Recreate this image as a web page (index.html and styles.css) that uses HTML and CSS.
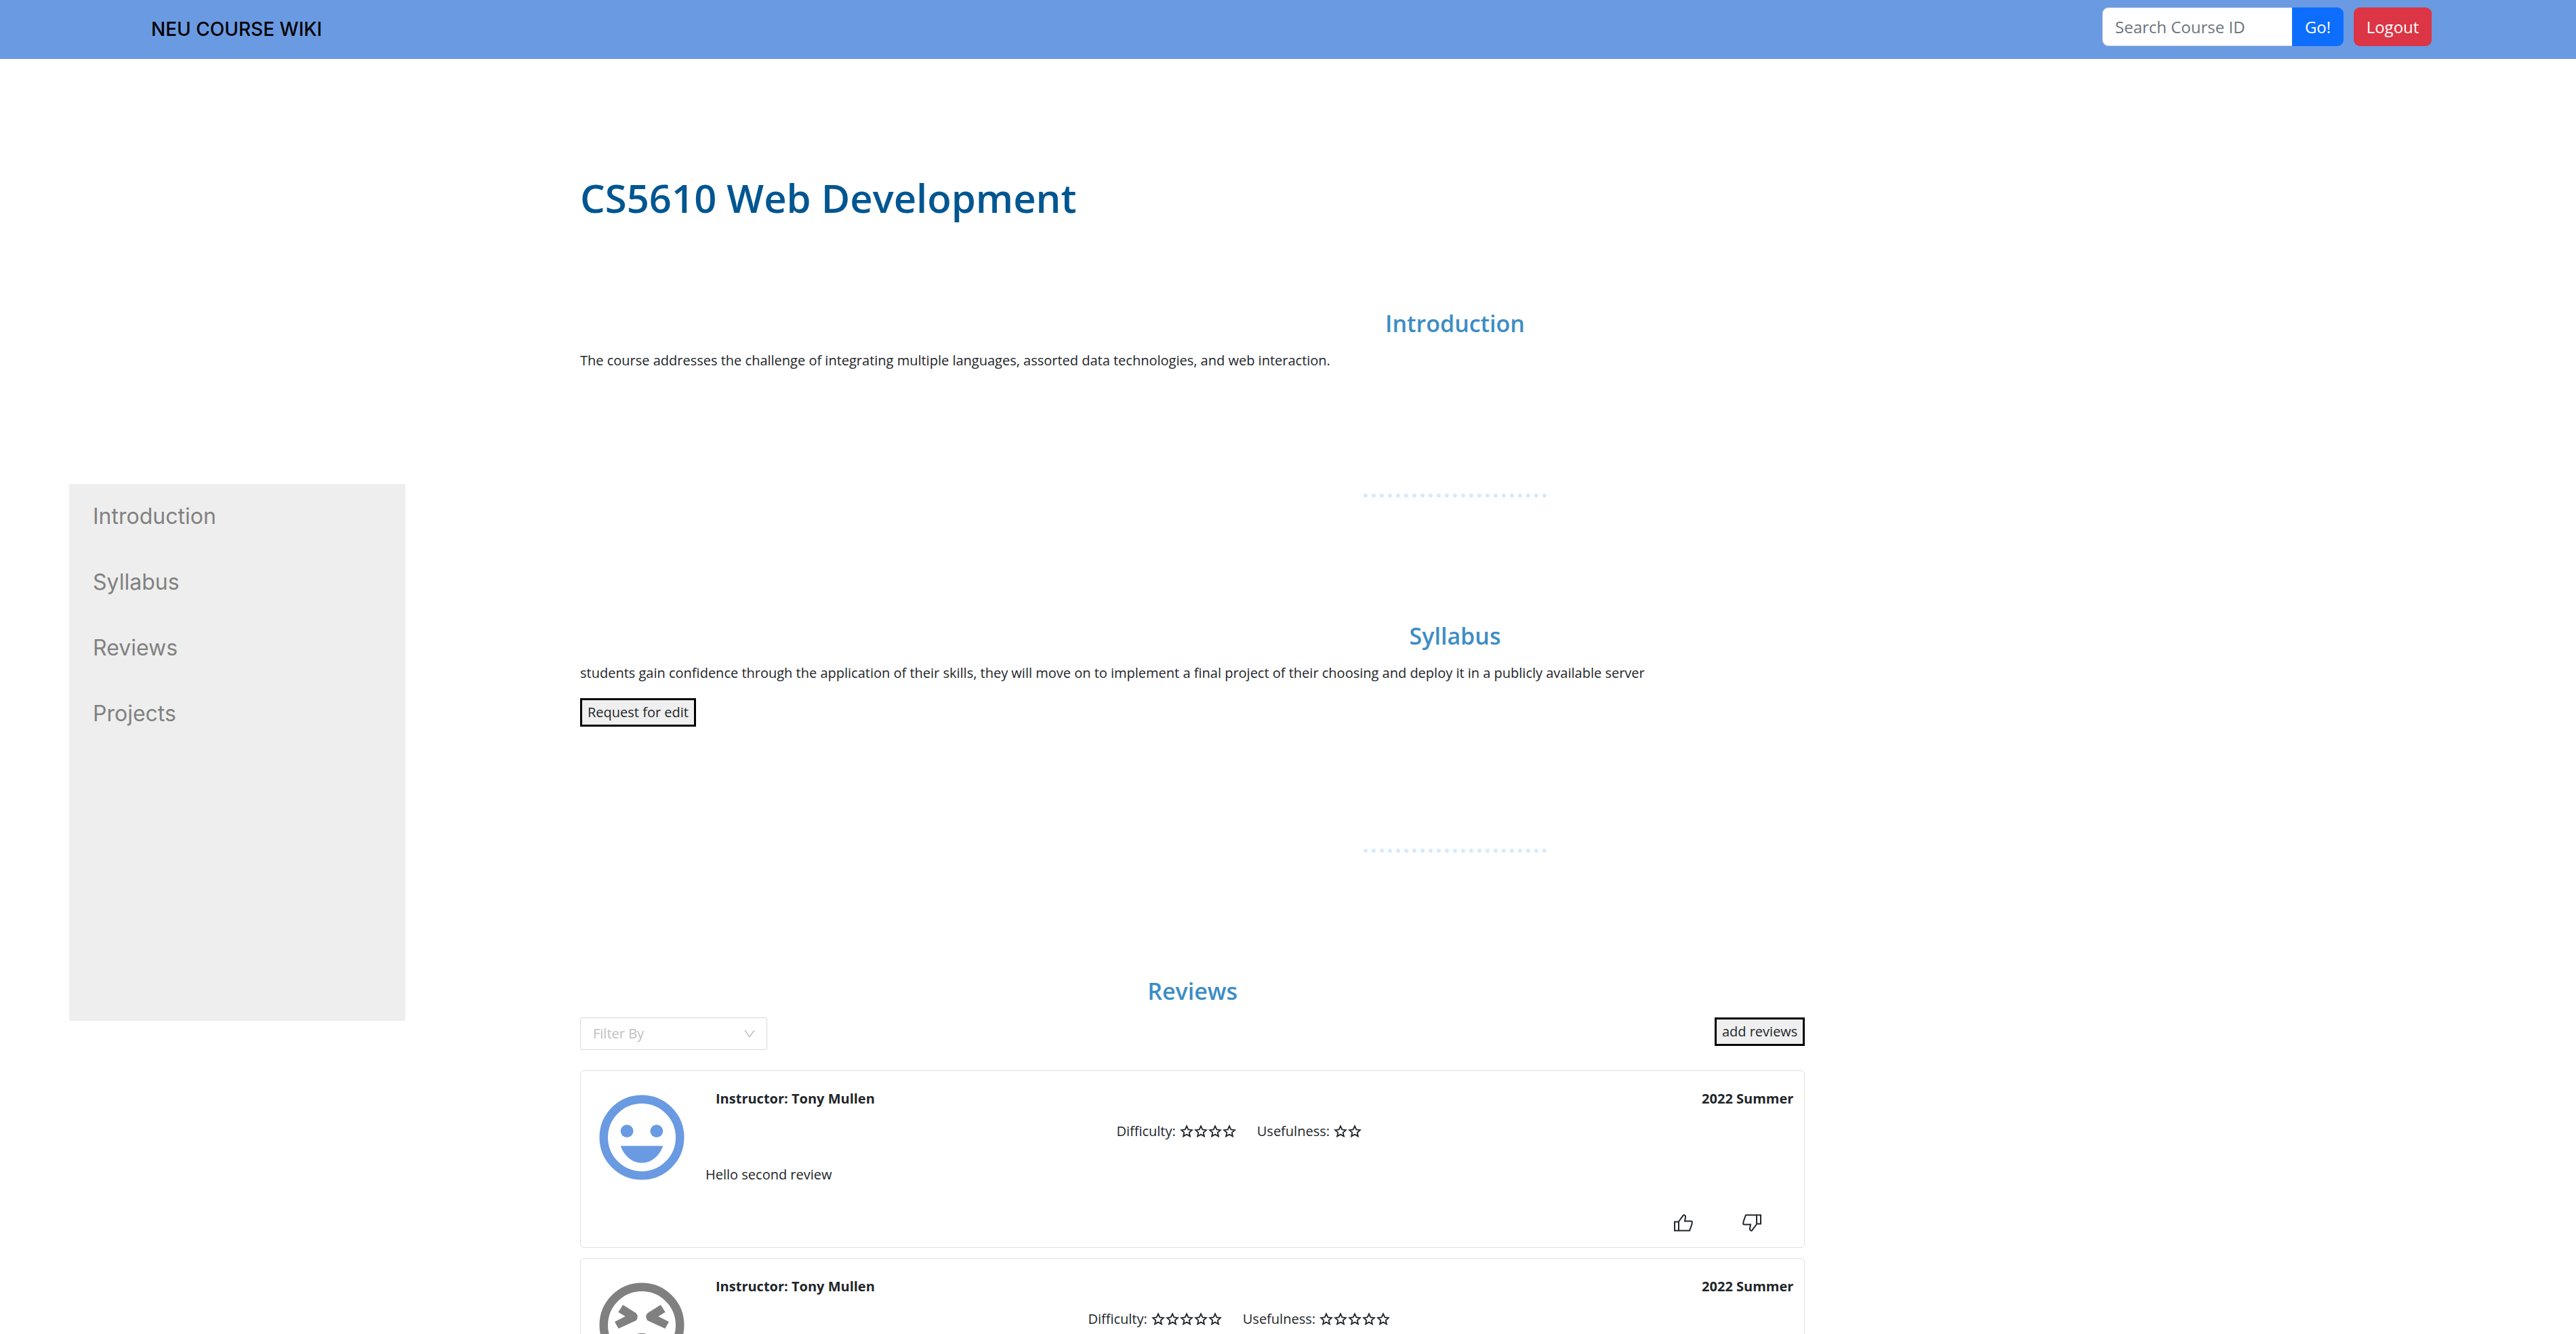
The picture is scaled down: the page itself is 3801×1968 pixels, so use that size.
FILE: index.html
```html
<!DOCTYPE html>
<html lang="en">
<head>
<meta charset="utf-8">
<title>NEU Course Wiki</title>
<link rel="stylesheet" href="styles.css">
</head>
<body>
<svg class="sprite" aria-hidden="true">
  <symbol id="star" viewBox="0 0 24 24"><path d="M12 2.8l2.8 6.2 6.7.7-5 4.5 1.4 6.6-5.9-3.4-5.9 3.4 1.4-6.6-5-4.5 6.7-.7z" fill="none" stroke="currentColor" stroke-width="2.2"/></symbol>
  <symbol id="thumb" viewBox="0 0 28 26"><path d="M7 11L13.6 2.2Q14.2 .8 15.6 1.6Q17.4 2.4 17 4.4L16 10.5H25.8Q27 10.7 26.8 12.2L26.4 15L23 24.5H1V11.5H7V24.5" fill="none" stroke="currentColor" stroke-width="2"/></symbol>
</svg>
<header class="navbar">
  <a class="brand" href="#">NEU COURSE WIKI</a>
  <form class="search">
    <input class="search-input" type="text" placeholder="Search Course ID" aria-label="Search Course ID">
    <button class="btn btn-go" type="button">Go!</button>
    <button class="btn btn-logout" type="button">Logout</button>
  </form>
</header>
<div class="page">
  <nav class="sidebar">
    <a href="#introduction">Introduction</a>
    <a href="#syllabus">Syllabus</a>
    <a href="#reviews">Reviews</a>
    <a href="#projects">Projects</a>
  </nav>
  <main class="content">
    <h1>CS5610 Web Development</h1>
    <section id="introduction">
      <h2>Introduction</h2>
      <p>The course addresses the challenge of integrating multiple languages, assorted data technologies, and web interaction.</p>
    </section>
    <hr>
    <section id="syllabus">
      <h2>Syllabus</h2>
      <p>students gain confidence through the application of their skills, they will move on to implement a final project of their choosing and deploy it in a publicly available server</p>
      <button class="outlined edit" type="button">Request for edit</button>
    </section>
    <hr>
    <section id="reviews" class="reviews">
      <h2>Reviews</h2>
      <div class="toolbar">
        <div class="filter">
          <select aria-label="Filter By"><option>Filter By</option></select>
          <svg class="chevron" viewBox="0 0 16 12" aria-hidden="true"><path d="M1 1L8 10.500L15 1" fill="none" stroke="currentColor" stroke-width="1.500"/></svg>
        </div>
        <button class="outlined" type="button">add reviews</button>
      </div>
      <article class="card">
        <svg class="face happy" viewBox="0 0 24 24" aria-hidden="true"><circle cx="12" cy="12" r="9" fill="none" stroke="currentColor" stroke-width="2"/><circle cx="8.500" cy="10.500" r="1.500" fill="currentColor"/><circle cx="15.500" cy="10.500" r="1.500" fill="currentColor"/><path d="M12 18c2.280 0 4.220-1.660 5-4H7c.780 2.340 2.720 4 5 4z" fill="currentColor"/></svg>
        <div class="card-body">
          <div class="card-head"><strong>Instructor: Tony Mullen</strong><strong>2022 Summer</strong></div>
          <div class="ratings">
            <span class="rating">Difficulty: <span class="stars"><svg><use href="#star"/></svg><svg><use href="#star"/></svg><svg><use href="#star"/></svg><svg><use href="#star"/></svg></span></span>
            <span class="rating">Usefulness: <span class="stars"><svg><use href="#star"/></svg><svg><use href="#star"/></svg></span></span>
          </div>
          <p class="comment">Hello second review</p>
          <div class="votes">
            <button type="button" aria-label="Like"><svg><use href="#thumb"/></svg></button>
            <button type="button" aria-label="Dislike"><svg class="down"><use href="#thumb"/></svg></button>
          </div>
        </div>
      </article>
      <article class="card">
        <svg class="face" viewBox="0 0 24 24" aria-hidden="true"><circle cx="12" cy="12" r="9" fill="none" stroke="currentColor" stroke-width="2"/><path d="M7.550 7.200L10.600 9.100Q11 9.450 11 10T10.600 10.900L6.500 12.800L5.600 11.200L8.100 9.900L6.450 8.900zM16.450 7.200L13.400 9.100Q13 9.450 13 10T13.400 10.900L17.500 12.800L18.400 11.200L15.900 9.900L17.550 8.900zM12 13.900c-2.300 0-4.300 1.500-5.100 3.600h10.200c-.8-2.100-2.800-3.600-5.100-3.600z" fill="currentColor"/></svg>
        <div class="card-body">
          <div class="card-head"><strong>Instructor: Tony Mullen</strong><strong>2022 Summer</strong></div>
          <div class="ratings">
            <span class="rating">Difficulty: <span class="stars"><svg><use href="#star"/></svg><svg><use href="#star"/></svg><svg><use href="#star"/></svg><svg><use href="#star"/></svg><svg><use href="#star"/></svg></span></span>
            <span class="rating">Usefulness: <span class="stars"><svg><use href="#star"/></svg><svg><use href="#star"/></svg><svg><use href="#star"/></svg><svg><use href="#star"/></svg><svg><use href="#star"/></svg></span></span>
          </div>
        </div>
      </article>
    </section>
  </main>
</div>
</body>
</html>
```
FILE: styles.css
```css
* { box-sizing: border-box; }
body {
  margin: 0;
  background: #fff;
  color: #212529;
  font-family: "Open Sans", "Noto Sans", sans-serif;
  font-size: 20px;
  line-height: 32px;
}
button, input, select { font: inherit; color: inherit; margin: 0; }
.sprite { display: none; }

.navbar {
  display: flex;
  justify-content: space-between;
  align-items: flex-start;
  height: 87px;
  padding: 11px 213px 0 223px;
  background: #6a9ae2;
}
.brand {
  padding-top: 16px;
  font-family: Inter, sans-serif;
  font-size: 28px;
  font-weight: 500;
  color: #000;
  text-decoration: none;
}
.search { display: flex; font-size: 24px; }
.search-input {
  width: 280px;
  height: 57px;
  padding: 0 18px;
  border: 1px solid #ced4da;
  border-right: 0;
  border-radius: 9px 0 0 9px;
  background: #fff;
}
.search-input::placeholder { color: #6c757d; opacity: 1; }
.btn { height: 57px; padding: 0; border: 0; color: #fff; }
.btn-go { width: 76px; border-radius: 0 9px 9px 0; background: #0d6efd; }
.btn-logout { width: 115px; margin-left: 15px; border-radius: 9px; background: #dc3545; }

.page {
  display: grid;
  grid-template-columns: 496fr 2582fr;
  column-gap: 258px;
  padding: 0 363px 0 102px;
}
.sidebar {
  display: flex;
  flex-direction: column;
  align-self: start;
  gap: 49px;
  min-height: 792px;
  margin-top: 627px;
  padding: 24px 35px;
  background: #eee;
}
.sidebar a {
  font-family: Inter, sans-serif;
  font-size: 32px;
  line-height: 48px;
  color: #818181;
  text-decoration: none;
}
.content { padding-top: 169px; }
h1 { margin: 0 0 125px; font-size: 58px; line-height: 72px; font-weight: 600; color: #005691; }
h2 { margin: 0 0 15px; font-size: 34px; line-height: 48px; font-weight: 600; color: #3c8dc5; text-align: center; }
p { margin: 0; }
hr { width: 270px; margin: 180px auto; border: 0; border-top: 6px dotted #d9eaf8; }
.outlined {
  height: 42px;
  padding: 0 8px;
  border: 3px solid #000;
  background: #efefef;
}
.edit { display: block; margin-top: 21px; }

.reviews { width: 70%; }
.toolbar { display: flex; justify-content: space-between; align-items: flex-start; margin-bottom: 30px; }
.filter { position: relative; width: 276px; }
.filter select {
  display: block;
  width: 100%;
  height: 48px;
  padding: 0 18px;
  appearance: none;
  border: 1px solid #d9d9d9;
  border-radius: 3px;
  background: #fff;
  color: #bfbfbf;
}
.chevron { position: absolute; right: 18px; top: 18px; width: 16px; height: 12px; color: #bfbfbf; }
.card {
  display: flex;
  align-items: flex-start;
  min-height: 262px;
  margin-bottom: 15px;
  padding: 23px 16px 0 15px;
  border: 1px solid #dfdfdf;
  border-radius: 6px;
}
.face { flex: none; width: 150px; height: 150px; color: #808080; }
.happy { color: #6a9ae2; }
.card-body { flex: 1; margin-left: -12px; }
.card-head { display: flex; justify-content: space-between; padding: 2px 0 0 46px; }
.ratings { display: flex; justify-content: center; gap: 31px; margin-top: 16px; }
.rating { display: flex; gap: 6px; }
.stars { display: flex; align-items: center; gap: 1px; }
.stars svg { width: 20px; height: 20px; }
.comment { margin-top: 32px; padding-left: 31px; }
.votes { display: flex; justify-content: flex-end; gap: 73px; margin-top: 42px; padding-right: 47px; }
.votes button { padding: 0; border: 0; background: none; }
.votes svg { display: block; width: 28px; height: 26px; }
.votes .down { transform: rotate(180deg); }
```
